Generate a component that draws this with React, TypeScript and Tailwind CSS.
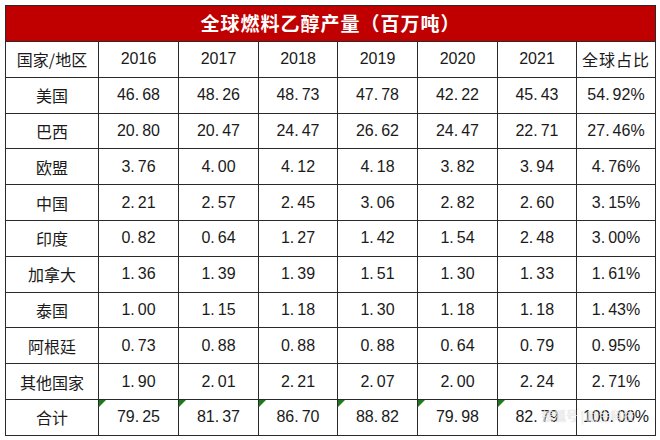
import React from "react"

const years = ["2016", "2017", "2018", "2019", "2020", "2021"]

const rows: [string, string[], string][] = [
  ["美国", ["46.68", "48.26", "48.73", "47.78", "42.22", "45.43"], "54.92%"],
  ["巴西", ["20.80", "20.47", "24.47", "26.62", "24.47", "22.71"], "27.46%"],
  ["欧盟", ["3.76", "4.00", "4.12", "4.18", "3.82", "3.94"], "4.76%"],
  ["中国", ["2.21", "2.57", "2.45", "3.06", "2.82", "2.60"], "3.15%"],
  ["印度", ["0.82", "0.64", "1.27", "1.42", "1.54", "2.48"], "3.00%"],
  ["加拿大", ["1.36", "1.39", "1.39", "1.51", "1.30", "1.33"], "1.61%"],
  ["泰国", ["1.00", "1.15", "1.18", "1.30", "1.18", "1.18"], "1.43%"],
  ["阿根廷", ["0.73", "0.88", "0.88", "0.88", "0.64", "0.79"], "0.95%"],
  ["其他国家", ["1.90", "2.01", "2.21", "2.07", "2.00", "2.24"], "2.71%"],
]

const total = ["79.25", "81.37", "86.70", "88.82", "79.98", "82.79"]

const cjk = { fontFamily: '"Noto Sans CJK SC", "Noto Sans", sans-serif' }
const num = { fontFamily: '"Liberation Sans", Arial, sans-serif' }

// the source renders the decimal point with a wide gap after it
function Num({ value }: { value: string }) {
  const i = value.indexOf(".")
  if (i < 0) return <>{value}</>
  return (
    <>
      {value.slice(0, i)}
      <span className="mr-[3px]">.</span>
      {value.slice(i + 1)}
    </>
  )
}

const cell = "border border-[#2a2a2a] text-center align-middle p-0 text-[16px] text-[#1a1a1a]"

export default function App() {
  return (
    <div className="w-[660px] h-[440px] bg-white pt-[5px] pl-[5px] relative overflow-hidden">
      <table className="border-collapse table-fixed w-[650px]">
        <colgroup>
          <col className="w-[93px]" />
          <col className="w-[80px]" />
          <col className="w-[80px]" />
          <col className="w-[79px]" />
          <col className="w-[80px]" />
          <col className="w-[80px]" />
          <col className="w-[79px]" />
          <col className="w-[79px]" />
        </colgroup>
        <tbody>
          <tr className="h-[36px]">
            <td
              colSpan={8}
              className="border border-[#2a2a2a] bg-[#c00000] text-white text-center text-[19px] font-bold tracking-[1px] p-0"
              style={cjk}
            >
              全球燃料乙醇产量（百万吨）
            </td>
          </tr>
          <tr className="h-[35.8px]">
            <td className={cell} style={cjk}>国家/地区</td>
            {years.map((y) => (
              <td key={y} className={cell} style={num}>{y}</td>
            ))}
            <td className={cell + " tracking-[1px]"} style={cjk}>全球占比</td>
          </tr>
          {rows.map(([name, vals, share]) => (
            <tr key={name} className="h-[35.8px]">
              <td className={cell} style={cjk}>{name}</td>
              {vals.map((v, i) => (
                <td key={i} className={cell} style={num}><Num value={v} /></td>
              ))}
              <td className={cell} style={num}><Num value={share} /></td>
            </tr>
          ))}
          <tr className="h-[35.8px]">
            <td className={cell} style={cjk}>合计</td>
            {total.map((v, i) => (
              <td key={i} className={cell + " relative"} style={num}>
                <span className="absolute left-0 top-0 w-0 h-0 border-t-[7px] border-r-[7px] border-t-[#1f7a1f] border-r-transparent" />
                <Num value={v} />
              </td>
            ))}
            <td className={cell} style={num}><Num value="100.00%" /></td>
          </tr>
        </tbody>
      </table>
      {/* faint watermark over the bottom-right cells */}
      <div
        className="absolute left-[542px] top-[410px] text-[12px] leading-none text-white/75 whitespace-nowrap"
        style={{ ...cjk, textShadow: "0 0 1px rgba(120,120,120,0.5)" }}
      >
        搜狐号 | 励生科技
      </div>
    </div>
  )
}
